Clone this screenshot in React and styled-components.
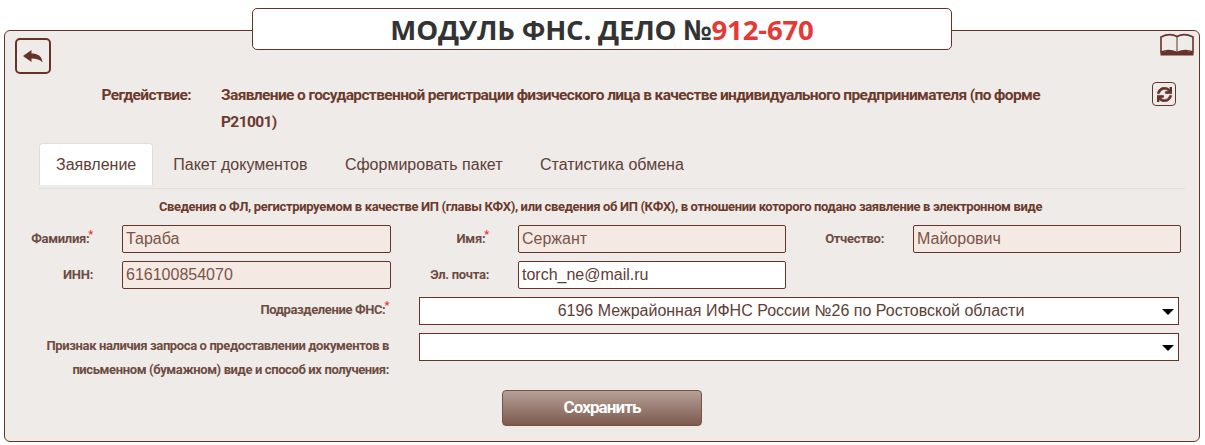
import React from "react";
import styled, { createGlobalStyle } from "styled-components";
import { FaSync } from "react-icons/fa";

const brown = "#66332a";
const narrow = 'Roboto, "Liberation Sans", sans-serif';

const GlobalStyle = createGlobalStyle`
  html, body {
    margin: 0;
    padding: 0;
    background: #fff;
    font-family: "Liberation Sans", Arial, sans-serif;
  }
  * {
    box-sizing: border-box;
  }
`;

function BackIcon() {
  return (
    <svg width="20" height="13" viewBox="0 0 20 13">
      <path d="M0 6L8.500 0V3.500C14.500 3.500 19 6 19.500 12.500C17 9.500 13.500 8.500 8.500 8.500V12Z" fill="#66332a" />
    </svg>
  );
}

function BookIcon() {
  return (
    <svg width="34" height="23" viewBox="0 0 34 23">
      <path
        d="M1 19V4C6 1.500 12.500 1 17 3.500C21.500 1 28 1.500 33 4V19C28 17 21.500 17.500 17 19.500C12.500 17.500 6 17 1 19Z"
        fill="none"
        stroke="#66332a"
        strokeWidth="1.600"
      />
      <path d="M17 3.500V19" stroke="#66332a" strokeWidth="1" />
      <path
        d="M0.500 19.500C6 17.500 12.500 17.500 17 19.500C21.500 17.500 28 17.500 33.500 19.500V22.500H0.500Z"
        fill="#66332a"
      />
    </svg>
  );
}

export default function App() {
  return (
    <Page>
      <GlobalStyle />
      <Title>
        МОДУЛЬ ФНС. ДЕЛО №<TitleNumber>912-670</TitleNumber>
      </Title>
      <Panel>
        <TopBar>
          <BackButton>
            <BackIcon />
          </BackButton>
          <BookLink>
            <BookIcon />
          </BookLink>
        </TopBar>

        <ActionRow>
          <ActionLabel>Регдействие:</ActionLabel>
          <ActionValue>
            Заявление о государственной регистрации физического лица в качестве индивидуального предпринимателя (по форме Р21001)
          </ActionValue>
          <RefreshButton>
            <FaSync size={15} />
          </RefreshButton>
        </ActionRow>

        <Tabs>
          <Tab $active>Заявление</Tab>
          <Tab>Пакет документов</Tab>
          <Tab>Сформировать пакет</Tab>
          <Tab>Статистика обмена</Tab>
        </Tabs>

        <SectionTitle>
          Сведения о ФЛ, регистрируемом в качестве ИП (главы КФХ), или сведения об ИП (КФХ), в отношении которого подано заявление в электронном виде
        </SectionTitle>

        <FieldsGrid>
          <FieldLabel>
            Фамилия:<Required>*</Required>
          </FieldLabel>
          <Input $locked>Тараба</Input>
          <FieldLabel>
            Имя:<Required>*</Required>
          </FieldLabel>
          <Input $locked>Сержант</Input>
          <FieldLabel>Отчество:</FieldLabel>
          <Input $locked>Майорович</Input>

          <FieldLabel>ИНН:</FieldLabel>
          <Input $locked>616100854070</Input>
          <FieldLabel>Эл. почта:</FieldLabel>
          <Input>torch_ne@mail.ru</Input>
        </FieldsGrid>

        <WideRow>
          <WideLabel>
            Подразделение ФНС:<Required>*</Required>
          </WideLabel>
          <Select>
            6196 Межрайонная ИФНС России №26 по Ростовской области
            <Arrow />
          </Select>
        </WideRow>
        <WideRow>
          <WideLabel>
            Признак наличия запроса о предоставлении документов в письменном (бумажном) виде и способ их получения:
          </WideLabel>
          <Select>
            <Arrow />
          </Select>
        </WideRow>

        <Footer>
          <SaveButton>Сохранить</SaveButton>
        </Footer>
      </Panel>
    </Page>
  );
}

const Page = styled.div`
  padding: 8px 5px 0 4px;
  height: 445px;
  overflow: hidden;
`;

const Title = styled.div`
  position: relative;
  z-index: 1;
  width: 700px;
  height: 42px;
  margin: 0 0 -20px 248px;
  background: #fff;
  border: 1px solid ${brown};
  border-radius: 5px;
  text-align: center;
  font-family: "Open Sans", sans-serif;
  font-weight: 700;
  font-size: 27.6px;
  line-height: 40px;
  color: #333;
  letter-spacing: -0.2px;
`;

const TitleNumber = styled.span`
  color: #e53935;
`;

const Panel = styled.div`
  height: 412px;
  background: #efebe9;
  border: 1px solid ${brown};
  border-radius: 6px;
  padding: 7px 5px 0 10px;
`;

const TopBar = styled.div`
  display: flex;
  justify-content: space-between;
  align-items: flex-start;
  height: 36px;
`;

const BackButton = styled.div`
  width: 36px;
  height: 36px;
  border: 2px solid ${brown};
  border-radius: 5px;
  display: flex;
  align-items: center;
  justify-content: center;
`;

const BookLink = styled.div`
  margin-top: -5px;
  height: 23px;
`;

const ActionRow = styled.div`
  display: grid;
  grid-template-columns: 176px 961px 24px;
  margin-top: 8px;
  height: 54px;
  font-family: ${narrow};
  font-weight: 700;
  font-size: 15.5px;
  line-height: 27px;
  letter-spacing: -0.62px;
  color: #6b3a2c;
`;

const ActionLabel = styled.div`
  text-align: right;
`;

const ActionValue = styled.div`
  margin-left: 30px;
  width: 830px;
`;

const RefreshButton = styled.div`
  width: 24px;
  height: 24px;
  border: 1px solid ${brown};
  border-radius: 4px;
  color: ${brown};
  display: flex;
  align-items: center;
  justify-content: center;

  svg {
    stroke: currentColor;
    stroke-width: 24;
  }
`;

const Tabs = styled.div`
  display: flex;
  height: 46px;
  margin: 7px 9px 0 24px;
  border-bottom: 1px solid #e4dedb;
`;

const Tab = styled.div`
  height: 42px;
  padding: 0 16px;
  margin-right: ${(p) => (p.$active ? "3px" : "3.4px")};
  font-size: 16px;
  line-height: 42px;
  color: #5d4037;
  background: ${(p) => (p.$active ? "#fff" : "transparent")};
  border: 1px solid ${(p) => (p.$active ? "#e4dedb" : "transparent")};
  border-bottom: none;
  border-radius: 4px 4px 0 0;
`;

const SectionTitle = styled.div`
  margin-top: 8px;
  text-align: center;
  font-family: ${narrow};
  font-weight: 700;
  font-size: 13px;
  line-height: 20px;
  letter-spacing: -0.35px;
  color: #6b3a2c;
  padding-right: 8px;
`;

const FieldsGrid = styled.div`
  display: grid;
  grid-template-columns: 107px 269px 127px 268px 127px 268px;
  grid-auto-rows: 28px;
  row-gap: 8px;
  margin-top: 8px;
`;

const FieldLabel = styled.div`
  padding-right: 29px;
  text-align: right;
  font-family: ${narrow};
  font-weight: 700;
  font-size: 13px;
  line-height: 28px;
  letter-spacing: -0.3px;
  color: #6d4c41;
`;

const Required = styled.sup`
  color: #e53935;
  font-size: 11px;
  line-height: 0;
  margin-left: -1px;
`;

const Input = styled.div`
  height: 28px;
  padding: 0 3px;
  font-size: 16px;
  line-height: 26px;
  color: ${(p) => (p.$locked ? "#795548" : "#5d4037")};
  background: ${(p) => (p.$locked ? "#f5e9e4" : "#fff")};
  border: 1px solid ${brown};
  border-radius: 2px;
`;

const WideRow = styled.div`
  display: grid;
  grid-template-columns: 404px 760px;
  margin-top: 8px;
`;

const WideLabel = styled.div`
  padding: 0 30px 0 20px;
  text-align: right;
  font-family: ${narrow};
  font-weight: 700;
  font-size: 13px;
  line-height: 24px;
  letter-spacing: -0.38px;
  color: #6d4c41;
  margin-top: 1px;
`;

const Select = styled.div`
  position: relative;
  height: 28px;
  padding-right: 16px;
  background: #fff;
  border: 1px solid ${brown};
  text-align: center;
  font-size: 16px;
  line-height: 26px;
  color: #5d4037;
`;

const Arrow = styled.span`
  position: absolute;
  right: 4px;
  top: 11px;
  width: 0;
  height: 0;
  border-left: 6px solid transparent;
  border-right: 6px solid transparent;
  border-top: 6px solid #000;
`;

const Footer = styled.div`
  display: flex;
  justify-content: center;
  margin-top: 8px;
  padding-right: 5px;
`;

const SaveButton = styled.div`
  width: 200px;
  height: 36px;
  background: linear-gradient(#b5a097, #7d5a4e);
  border: 1px solid #7a5144;
  border-radius: 4px;
  color: #fff;
  text-align: center;
  font-family: ${narrow};
  font-weight: 700;
  font-size: 17px;
  line-height: 33px;
  letter-spacing: -0.9px;
`;
